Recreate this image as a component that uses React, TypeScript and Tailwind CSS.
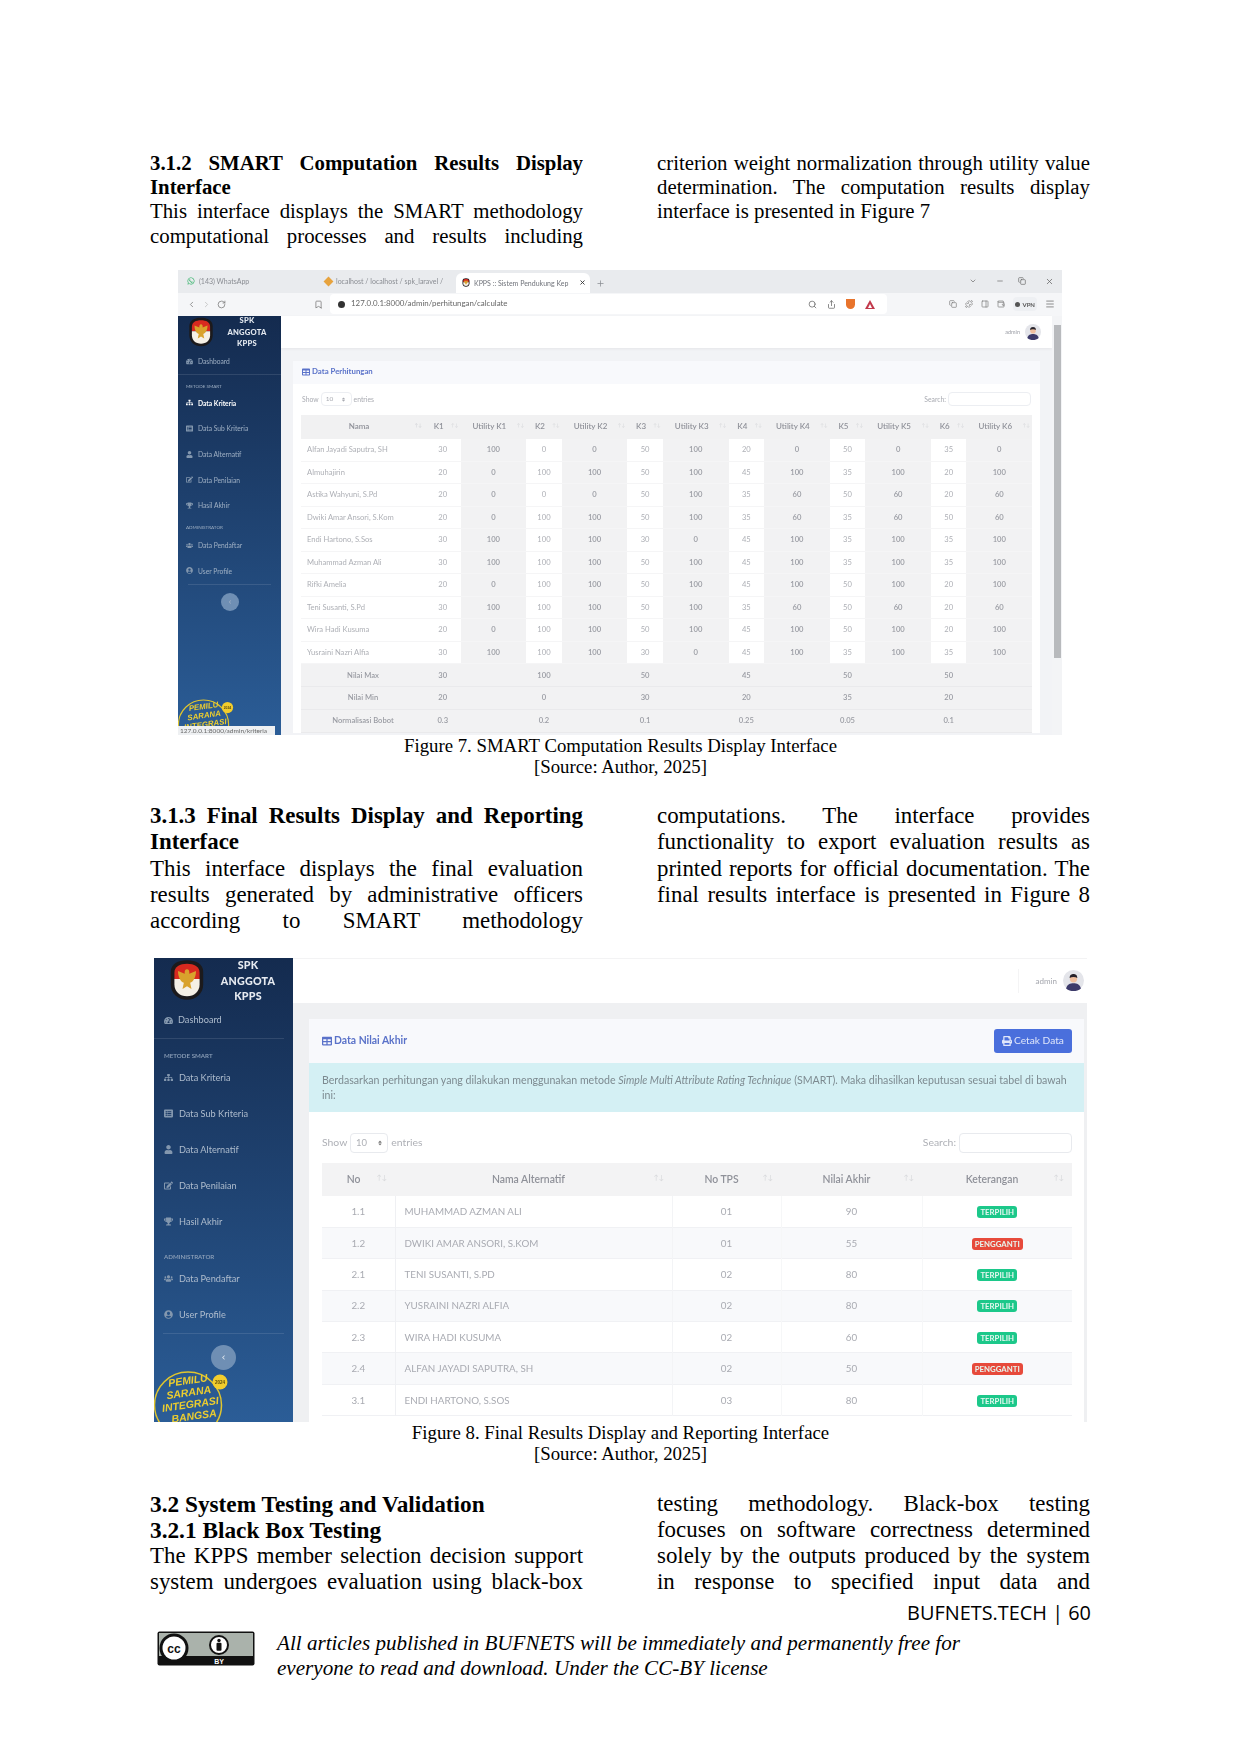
import React from "react";
import {
  FaTachometerAlt, FaSitemap, FaListAlt, FaUser, FaEdit, FaTrophy, FaUsers, FaUserCircle, FaTable, FaPrint, FaChevronLeft,
  FaWhatsapp, FaSort,
} from "react-icons/fa";
import { ChevronLeft, ChevronRight, RotateCw, Bookmark, ChevronDown, Minus, Copy, X, Plus, Search, Share, Puzzle, PanelRight, Wallet, Menu } from "lucide-react";

const times = "font-['Liberation_Serif',serif]";
const ui = "font-['Lato','Noto_Sans',sans-serif]";

function Line({ children, last }: { children: React.ReactNode; last?: boolean }) {
  return <div className={last ? "whitespace-nowrap" : "whitespace-nowrap [text-align:justify] [text-align-last:justify]"}>{children}</div>;
}

function Columns({ left, right, cls }: { left: React.ReactNode; right: React.ReactNode; cls: string }) {
  return (
    <div className={`grid grid-cols-[433px_433px] gap-x-[74px] px-[150px] text-black ${times} ${cls}`}>
      <div>{left}</div>
      <div>{right}</div>
    </div>
  );
}

function KpuLogo({ className }: { className: string }) {
  return (
    <svg viewBox="0 0 40 46" className={className}>
      <path d="M20 1 C30 1 38 5 38 14 V28 C38 38 30 45 20 45 C10 45 2 38 2 28 V14 C2 5 10 1 20 1Z" fill="#1c1a1c" />
      <path d="M20 5 C28 5 34 8 34 15 V22 H6 V15 C6 8 12 5 20 5Z" fill="#d8291f" />
      <path d="M6 22 H34 V28 C34 36 28 41 20 41 C12 41 6 36 6 28Z" fill="#f5f0e6" />
      <path d="M20 11 C22 11 23 13 22.5 16 L30 13 C30 20 27 25 23.5 26 L25 33 L20 30 L15 33 L16.5 26 C13 25 10 20 10 13 L17.5 16 C17 13 18 11 20 11Z" fill="#d9a22c" />
    </svg>
  );
}

function PemiluLogo({ className }: { className: string }) {
  return (
    <svg viewBox="0 0 80 60" className={className}>
      <ellipse cx="34" cy="37" rx="33.5" ry="33" fill="none" stroke="#e0c52e" strokeWidth="1.5" />
      <g transform="rotate(-8 36 34)" fill="#eccd2e" fontFamily="'Liberation Sans',sans-serif" fontWeight="700" fontStyle="italic" textAnchor="middle">
        <text x="37" y="16" fontSize="10.5">PEMILU</text>
        <text x="36" y="28" fontSize="10.5">SARANA</text>
        <text x="36" y="40" fontSize="10.5">INTEGRASI</text>
        <text x="38" y="52" fontSize="10.5">BANGSA</text>
      </g>
      <circle cx="66" cy="14" r="7.5" fill="#f2cd2c" />
      <text x="66" y="16" fontSize="4.5" textAnchor="middle" fontWeight="700" fill="#5a4a10" fontFamily="'Liberation Sans',sans-serif">2024</text>
    </svg>
  );
}

function Avatar({ className }: { className: string }) {
  return (
    <svg viewBox="0 0 24 24" className={className}>
      <circle cx="12" cy="12" r="12" fill="#e4e5ea" />
      <path d="M3.5 21 C5 16 8 15 12 15 C16 15 19 16 20.5 21 C18 23.3 15 24 12 24 C9 24 6 23.3 3.5 21Z" fill="#3c3a6a" />
      <circle cx="12" cy="10" r="4.2" fill="#f0bf9f" />
      <path d="M7.6 9 C7.6 5.5 10 4.5 12 4.5 C14 4.5 16.4 5.5 16.4 9 C14 7.6 10 7.6 7.6 9Z" fill="#26222a" />
    </svg>
  );
}

type Row = (string | number)[];
const rows7: Row[] = [
  ["Alfan Jayadi Saputra, SH", 30, 100, 0, 0, 50, 100, 20, 0, 50, 0, 35, 0],
  ["Almuhajirin", 20, 0, 100, 100, 50, 100, 45, 100, 35, 100, 20, 100],
  ["Astika Wahyuni, S.Pd", 20, 0, 0, 0, 50, 100, 35, 60, 50, 60, 20, 60],
  ["Dwiki Amar Ansori, S.Kom", 20, 0, 100, 100, 50, 100, 35, 60, 35, 60, 50, 60],
  ["Endi Hartono, S.Sos", 30, 100, 100, 100, 30, 0, 45, 100, 35, 100, 35, 100],
  ["Muhammad Azman Ali", 30, 100, 100, 100, 50, 100, 45, 100, 35, 100, 35, 100],
  ["Rifki Amelia", 20, 0, 100, 100, 50, 100, 45, 100, 50, 100, 20, 100],
  ["Teni Susanti, S.Pd", 30, 100, 100, 100, 50, 100, 35, 60, 50, 60, 20, 60],
  ["Wira Hadi Kusuma", 20, 0, 100, 100, 50, 100, 45, 100, 50, 100, 20, 100],
  ["Yusraini Nazri Alfia", 30, 100, 100, 100, 30, 0, 45, 100, 35, 100, 35, 100],
];
const foot7: Row[] = [
  ["Nilai Max", 30, "", 100, "", 50, "", 45, "", 50, "", 50, ""],
  ["Nilai Min", 20, "", 0, "", 30, "", 20, "", 35, "", 20, ""],
  ["Normalisasi Bobot", 0.3, "", 0.2, "", 0.1, "", 0.25, "", 0.05, "", 0.1, ""],
];
const heads7 = ["K1", "Utility K1", "K2", "Utility K2", "K3", "Utility K3", "K4", "Utility K4", "K5", "Utility K5", "K6", "Utility K6"];

const items7a: [React.ComponentType<{ className?: string }>, string, boolean?][] = [
  [FaSitemap, "Data Kriteria", true],
  [FaListAlt, "Data Sub Kriteria"],
  [FaUser, "Data Alternatif"],
  [FaEdit, "Data Penilaian"],
  [FaTrophy, "Hasil Akhir"],
];
const items7b: [React.ComponentType<{ className?: string }>, string][] = [
  [FaUsers, "Data Pendaftar"],
  [FaUserCircle, "User Profile"],
];

function Figure7() {
  return (
    <div className={`mx-[178px] h-[465px] w-[884px] overflow-hidden bg-white blur-[0.55px] ${ui}`}>
      {/* tabs */}
      <div className="flex h-[23px] items-end bg-[#e9ebee] text-[7px] text-[#8a8d93]">
        <div className="flex h-full w-[136px] items-center gap-1 pl-[9px]">
          <FaWhatsapp className="size-[8px] text-[#27ae60]" />
          <span>(143) WhatsApp</span>
        </div>
        <div className="flex h-full w-[142px] items-center gap-1 pl-[11px]">
          <span className="size-[7px] rotate-45 bg-[#e7a33e]" />
          <span>localhost / localhost / spk_laravel /</span>
        </div>
        <div className="flex h-[20px] w-[134px] items-center gap-1 rounded-t-md bg-white pl-[6px] text-[#70737a]">
          <KpuLogo className="h-[9px] w-[8px]" />
          <span className="flex-1 whitespace-nowrap overflow-hidden">KPPS :: Sistem Pendukung Kep</span>
          <X className="mr-[4px] size-[7px] text-[#333]" strokeWidth={3} />
        </div>
        <Plus className="mb-[5px] ml-[6px] size-[9px]" />
        <div className="ml-auto flex h-full items-center pr-[8px] text-[#666]">
          <ChevronDown className="size-[8px]" />
          <Minus className="ml-[19px] size-[8px]" />
          <Copy className="ml-[14px] size-[8px]" />
          <X className="ml-[19px] size-[9px]" />
        </div>
      </div>
      {/* address */}
      <div className="flex h-[23px] items-center bg-[#f5f6f8] text-[#777]">
        <div className="flex w-[136px] items-center gap-[6px] pl-[9px]">
          <ChevronLeft className="size-[9px]" />
          <ChevronRight className="size-[9px] text-[#bbb]" />
          <RotateCw className="size-[9px]" />
        </div>
        <Bookmark className="size-[9px]" />
        <div className="ml-[7px] flex h-[20px] w-[557px] items-center rounded-sm bg-white pl-[8px] text-[7.9px] text-[#666]">
          <span className="mr-[6px] size-[7px] rounded-full bg-[#333]" />
          <span>127.0.0.1:8000/admin/perhitungan/calculate</span>
          <div className="ml-auto flex items-center gap-[10px] pr-[12px]">
            <Search className="size-[9px]" />
            <Share className="size-[9px]" />
            <span className="h-[10px] w-[9px] rounded-b-full rounded-t-sm bg-[#e8742c]" />
            <svg viewBox="0 0 10 9" className="h-[9px] w-[10px]"><path d="M5 0 L10 9 H0Z" fill="#c23a4c" /><path d="M5 4 L7 8 H3Z" fill="#fff" /></svg>
          </div>
        </div>
        <div className="ml-auto flex items-center gap-[8px] pr-[7px]">
          <Copy className="size-[8px]" />
          <Puzzle className="size-[8px]" />
          <PanelRight className="size-[8px]" />
          <Wallet className="size-[8px]" />
          <span className="flex h-[14px] items-center gap-[2px] rounded bg-[#eef0f3] px-[2px] text-[6px] font-bold text-[#555]"><span className="size-[5px] rounded-full bg-[#555]" />VPN</span>
          <Menu className="size-[10px]" />
        </div>
      </div>
      <div className="relative flex h-[419px]">
        <aside className="flex h-full w-[103px] shrink-0 flex-col overflow-hidden bg-gradient-to-b from-[#142b4f] to-[#2b5d97] text-[6.7px] text-[#9fb0c4]">
          <div className="flex h-[33px] shrink-0 items-center pl-[10px]">
            <KpuLogo className="h-[30px] w-[26px]" />
            <div className="ml-[8px] w-[50px] text-center text-[7.6px] leading-[11.5px] font-black tracking-[0.2px] text-[#e3e8ef]">SPK<br />ANGGOTA<br />KPPS</div>
          </div>
          <div className="flex h-[26px] shrink-0 items-center gap-[5px] border-b border-b-[#ffffff1c] pl-[8px]"><FaTachometerAlt className="size-[7px] text-[#8397ae]" />Dashboard</div>
          <div className="flex h-[15px] shrink-0 items-end pl-[8px] text-[4.6px]">METODE SMART</div>
          {items7a.map(([I, t, a]) => (
            <div key={t} className={`flex h-[25.7px] shrink-0 items-center gap-[5px] pl-[8px] ${a ? "font-bold text-white" : ""}`}><I className={a ? "size-[7px] text-white" : "size-[7px] text-[#8397ae]"} />{t}</div>
          ))}
          <div className="flex h-[14px] shrink-0 items-end pb-px pl-[8px] text-[4.6px]">ADMINISTRATOR</div>
          {items7b.map(([I, t]) => (
            <div key={t} className="flex h-[25.7px] shrink-0 items-center gap-[5px] pl-[8px]"><I className="size-[7px] text-[#8397ae]" />{t}</div>
          ))}
          <div className="mx-[10px] h-px shrink-0 bg-[#ffffff1c]" />
          <div className="mx-auto mt-[8px] flex size-[18px] shrink-0 items-center justify-center rounded-full bg-[#6f8fb4]"><FaChevronLeft className="size-[4px]" /></div>
        </aside>
        <PemiluLogo className="absolute bottom-[-7px] left-0 h-[45px] w-[60px]" />
        <div className="absolute bottom-0 left-0 h-[9px] w-[97px] bg-[#eef0f2] pl-[2px] text-[6.5px] leading-[9px] text-[#666]">127.0.0.1:8000/admin/kriteria</div>
        <div className="min-w-0 flex-1 bg-[#f2f3f6]">
          <div className="flex h-[32px] items-center justify-end bg-white pr-[11px] shadow-[0_1px_3px_#0000000f]">
            <span className="mr-[5px] text-[5.5px] text-[#9a9ca4]">admin</span>
            <Avatar className="size-[16px]" />
          </div>
          <div className="mx-[12px] mt-[13px] bg-white">
            <div className="flex h-[23px] items-center gap-[2px] bg-[#f8f9fc] pl-[9px] text-[7.8px] font-bold text-[#5a72c9]">
              <FaTable className="size-[8px]" />Data Perhitungan
            </div>
            <div className="flex h-[31px] items-center px-[9px] text-[6.8px] text-[#a9abb2]">
              <span>Show</span>
              <span className="mx-[2px] flex h-[14px] w-[31px] items-center justify-around rounded-sm border border-[#eceef2] text-[6.5px]">10 <FaSort className="size-[5px]" /></span>
              <span>entries</span>
              <span className="ml-auto mr-[2px]">Search:</span>
              <span className="h-[14px] w-[83px] rounded-sm border border-[#eceef2]" />
            </div>
            <table className="ml-[8px] w-[731px] table-fixed border-collapse text-center text-[7.6px] text-[#aeb0b6]">
              <thead>
                <tr className="h-[24px] bg-[#f1f1f2] text-[8px] text-[#8f9199]">
                  <th className="relative w-[124px] pb-[2px] pr-[8px] font-semibold">Nama<span className="absolute right-[3px] top-[7px] text-[5px] font-normal text-[#cfd0d4]">↑↓</span></th>
                  {heads7.map((h, i) => (
                    <th key={h} className={`relative pb-[2px] pr-[8px] font-semibold whitespace-nowrap ${i % 2 ? "w-[65.7px]" : "w-[35.5px]"}`}>
                      {h}
                      <span className="absolute right-[2px] top-[7px] text-[5px] font-normal text-[#d6d7da]">↑↓</span>
                    </th>
                  ))}
                </tr>
              </thead>
              <tbody>
                {rows7.map((r) => (
                  <tr key={String(r[0])} className="h-[22.5px] border-b border-[#f5f5f6]">
                    {r.map((c, i) => (
                      <td key={i} className={i === 0 ? "pl-[6px] text-left" : i % 2 ? "bg-white" : "bg-[#f2f2f3] font-semibold text-[#9a9ca3]"}>{c}</td>
                    ))}
                  </tr>
                ))}
                {foot7.map((r) => (
                  <tr key={String(r[0])} className="h-[22.8px] border-b border-[#eaeaec] bg-[#f2f2f3] font-semibold text-[#9a9ca3]">
                    {r.map((c, i) => (
                      <td key={i}>{c}</td>
                    ))}
                  </tr>
                ))}
              </tbody>
            </table>
          </div>
        </div>
        <div className="flex h-full w-[10px] shrink-0 flex-col items-center bg-[#f3f4f6] pt-[9px]">
          <div className="h-[333px] w-[7px] bg-[#b8babd]" />
        </div>
      </div>
    </div>
  );
}

const rows8: [string, string, string, string, boolean][] = [
  ["1.1", "MUHAMMAD AZMAN ALI", "01", "90", true],
  ["1.2", "DWIKI AMAR ANSORI, S.KOM", "01", "55", false],
  ["2.1", "TENI SUSANTI, S.PD", "02", "80", true],
  ["2.2", "YUSRAINI NAZRI ALFIA", "02", "80", true],
  ["2.3", "WIRA HADI KUSUMA", "02", "60", true],
  ["2.4", "ALFAN JAYADI SAPUTRA, SH", "02", "50", false],
  ["3.1", "ENDI HARTONO, S.SOS", "03", "80", true],
];

function Th8({ children, cls }: { children: React.ReactNode; cls?: string }) {
  return (
    <th className={`relative pr-[10px] font-semibold ${cls ?? ""}`}>
      {children}
      <span className="absolute right-[8px] top-[9px] text-[7px] font-normal text-[#d6d7da]">↑↓</span>
    </th>
  );
}

function Figure8() {
  return (
    <div className={`relative ml-[154px] flex h-[464px] w-[933px] overflow-hidden bg-white blur-[0.5px] ${ui}`}>
      <aside className="flex h-full w-[139px] shrink-0 flex-col overflow-hidden bg-gradient-to-b from-[#142b4f] to-[#2b5d97] text-[9.2px] text-[#aebccd]">
        <div className="flex h-[45px] shrink-0 items-center pl-[15px]">
          <KpuLogo className="h-[42px] w-[36px]" />
          <div className="ml-[12px] w-[62px] text-center text-[10.7px] leading-[15.5px] font-black tracking-[0.2px] text-[#e6eaf0]">SPK<br />ANGGOTA<br />KPPS</div>
        </div>
        <div className="mr-[9px] flex h-[36px] shrink-0 items-center gap-[5px] border-b border-b-[#ffffff1c] pl-[10px]"><FaTachometerAlt className="size-[9px] text-[#8397ae]" />Dashboard</div>
        <div className="flex h-[21px] shrink-0 items-end pl-[10px] text-[6.2px] font-semibold text-[#8fa2ba]">METODE SMART</div>
        {items7a.map(([I, t]) => (
          <div key={t} className="flex h-[36px] shrink-0 items-center gap-[6px] pl-[10px]"><I className="size-[9px] text-[#8397ae]" />{t}</div>
        ))}
        <div className="flex h-[21px] shrink-0 items-end pl-[10px] text-[6.2px] font-semibold text-[#8fa2ba]">ADMINISTRATOR</div>
        {items7b.map(([I, t]) => (
          <div key={t} className="flex h-[36px] shrink-0 items-center gap-[6px] pl-[10px]"><I className="size-[9px] text-[#8397ae]" />{t}</div>
        ))}
        <div className="mx-[9px] h-px shrink-0 bg-[#ffffff1c]" />
        <div className="mx-auto mt-[11px] flex size-[25px] shrink-0 items-center justify-center rounded-full bg-[#6f8fb4] text-[#dfe6ee]"><FaChevronLeft className="size-[5px]" /></div>
      </aside>
      <PemiluLogo className="absolute bottom-[-6px] left-0 h-[60px] w-[80px]" />
      <div className="min-w-0 flex-1 bg-[#eff0f2]">
        <div className="flex h-[45px] items-center justify-end border-t border-[#f3f3f4] bg-white pr-[3px]">
          <span className="mr-[6px] flex h-[24px] items-center border-l border-[#f4f4f5] pl-[17px] text-[8px] text-[#a4a6ad]">admin</span>
          <Avatar className="size-[21px]" />
        </div>
        <div className="ml-[16px] mr-[3px] mt-[16px] h-[403px] overflow-hidden bg-white">
          <div className="flex h-[44px] items-center bg-[#f8f9fc] pl-[13px] pr-[12px] text-[10.4px] font-bold text-[#5a72c9]">
            <FaTable className="mr-[2px] size-[10px]" />Data Nilai Akhir
            <span className="ml-auto flex h-[24px] w-[78px] items-center justify-center gap-[2px] rounded-[3px] bg-[#4a6fdc] text-[10.2px] font-normal text-[#dfe6fa]"><FaPrint className="size-[10px]" />Cetak Data</span>
          </div>
          <div className="h-[49px] bg-[#d4f0f4] pl-[13px] pr-[14px] pt-[10px] text-[10.6px] leading-[15px] whitespace-nowrap text-[#7d8a90]">
            Berdasarkan perhitungan yang dilakukan menggunakan metode <i>Simple Multi Attribute Rating Technique</i> (SMART). Maka dihasilkan keputusan sesuai tabel di bawah<br />ini:
          </div>
          <div className="flex h-[51px] items-center pl-[13px] pr-[12px] pt-[11px] text-[10.4px] text-[#aeb0b6]">
            <span>Show</span>
            <span className="mx-[3px] flex h-[20px] w-[38px] items-center justify-around rounded-sm border border-[#e8eaee] text-[9.5px]">10 <FaSort className="size-[6px] text-[#777]" /></span>
            <span>entries</span>
            <span className="ml-auto mr-[3px]">Search:</span>
            <span className="h-[20px] w-[113px] rounded-sm border border-[#e8eaee]" />
          </div>
          <table className="ml-[13px] w-[750px] table-fixed border-collapse text-center text-[9.8px] text-[#a9abb2]">
            <thead>
              <tr className="h-[33px] bg-[#f3f3f4] text-[10.4px] text-[#8f9199]">
                <Th8 cls="w-[73px]">No</Th8>
                <Th8 cls="w-[277px]">Nama Alternatif</Th8>
                <Th8 cls="w-[109px]">No TPS</Th8>
                <Th8 cls="w-[141px]">Nilai Akhir</Th8>
                <Th8>Keterangan</Th8>
              </tr>
            </thead>
            <tbody>
              {rows8.map((r, i) => (
                <tr key={r[0]} className={`h-[31.4px] border-b border-[#f0f1f4] ${i % 2 ? "bg-[#f8f9fb]" : "bg-white"}`}>
                  <td className="border-r border-[#eff0f3]">{r[0]}</td>
                  <td className="border-r border-[#f3f4f6] pl-[9px] text-left">{r[1]}</td>
                  <td className="border-r border-[#f6f7f8]">{r[2]}</td>
                  <td className="border-r border-[#f6f7f8]">{r[3]}</td>
                  <td>
                    <span className={`inline-block h-[12px] rounded-[3px] px-[3px] text-[7.8px] leading-[12px] font-bold text-[#e6f7f0] ${r[4] ? "bg-[#1cc88a]" : "bg-[#e74a3b]"}`}>
                      {r[4] ? "TERPILIH" : "PENGGANTI"}
                    </span>
                  </td>
                </tr>
              ))}
            </tbody>
          </table>
        </div>
      </div>
    </div>
  );
}

function Caption({ a }: { a: string }) {
  return (
    <div className={`text-center text-[18.8px] leading-[21px] text-black ${times}`}>
      <div>{a}</div>
      <div>[Source: Author, 2025]</div>
    </div>
  );
}

function CcBadge() {
  return (
    <svg viewBox="0 0 98 35" className="h-[35px] w-[98px] shrink-0">
      <rect x="0.5" y="0.5" width="97" height="34" rx="2" fill="#111" />
      <rect x="2" y="2" width="94" height="23" fill="#aab2ab" />
      <circle cx="17" cy="17" r="14.5" fill="#111" />
      <circle cx="17" cy="17" r="11.5" fill="#fff" />
      <text x="17" y="21.5" textAnchor="middle" fontSize="12" fontWeight="700" fill="#111" fontFamily="'Liberation Sans',sans-serif">cc</text>
      <circle cx="62" cy="14" r="9" fill="#fff" stroke="#111" strokeWidth="2" />
      <circle cx="62" cy="9.5" r="1.7" fill="#111" />
      <rect x="59.5" y="11.8" width="5" height="8" rx="1" fill="#111" />
      <text x="62" y="33" textAnchor="middle" fontSize="7" fontWeight="700" fill="#fff" fontFamily="'Liberation Sans',sans-serif">BY</text>
    </svg>
  );
}

export default function App() {
  return (
    <div className="h-[1754px] w-[1241px] overflow-hidden bg-white pt-[151px]">
      <Columns
        cls="text-[20.8px] leading-[24.2px]"
        left={
          <>
            <div className="whitespace-nowrap font-bold [text-align:justify] [text-align-last:justify]">3.1.2 SMART Computation Results Display</div>
            <div className="font-bold">Interface</div>
            <Line>This interface displays the SMART methodology</Line>
            <Line>computational processes and results including</Line>
          </>
        }
        right={
          <>
            <Line>criterion weight normalization through utility value</Line>
            <Line>determination. The computation results display</Line>
            <Line last>interface is presented in Figure 7</Line>
          </>
        }
      />
      <div className="mt-[22px]"><Figure7 /></div>
      <Caption a="Figure 7. SMART Computation Results Display Interface" />
      <div className="mt-[26px]">
        <Columns
          cls="text-[22.9px] leading-[26.4px]"
          left={
            <>
              <div className="whitespace-nowrap font-bold [text-align:justify] [text-align-last:justify]">3.1.3 Final Results Display and Reporting</div>
              <div className="font-bold">Interface</div>
              <Line>This interface displays the final evaluation</Line>
              <Line>results generated by administrative officers</Line>
              <Line>according to SMART methodology</Line>
            </>
          }
          right={
            <>
              <Line>computations. The interface provides</Line>
              <Line>functionality to export evaluation results as</Line>
              <Line>printed reports for official documentation. The</Line>
              <Line>final results interface is presented in Figure 8</Line>
            </>
          }
        />
      </div>
      <div className="mt-[23px]"><Figure8 /></div>
      <Caption a="Figure 8. Final Results Display and Reporting Interface" />
      <div className="mt-[27px]">
        <Columns
          cls="text-[22.9px] leading-[26px]"
          left={
            <>
              <div className="text-[23.3px] font-bold">3.2 System Testing and Validation</div>
              <div className="text-[23.3px] font-bold">3.2.1 Black Box Testing</div>
              <Line>The KPPS member selection decision support</Line>
              <Line>system undergoes evaluation using black-box</Line>
            </>
          }
          right={
            <>
              <Line>testing methodology. Black-box testing</Line>
              <Line>focuses on software correctness determined</Line>
              <Line>solely by the outputs produced by the system</Line>
              <Line>in response to specified input data and</Line>
            </>
          }
        />
      </div>
      <div className="pr-[150px] pt-[5px] text-right font-['Open_Sans',sans-serif] text-[19.9px] leading-[26px] text-black">BUFNETS.TECH | 60</div>
      <div className="flex pl-[157px] pt-[5px]">
        <CcBadge />
        <div className={`ml-[22px] text-[21.1px] leading-[25px] italic text-black ${times}`}>
          <div>All articles published in BUFNETS will be immediately and permanently free for</div>
          <div>everyone to read and download. Under the CC-BY license</div>
        </div>
      </div>
    </div>
  );
}
